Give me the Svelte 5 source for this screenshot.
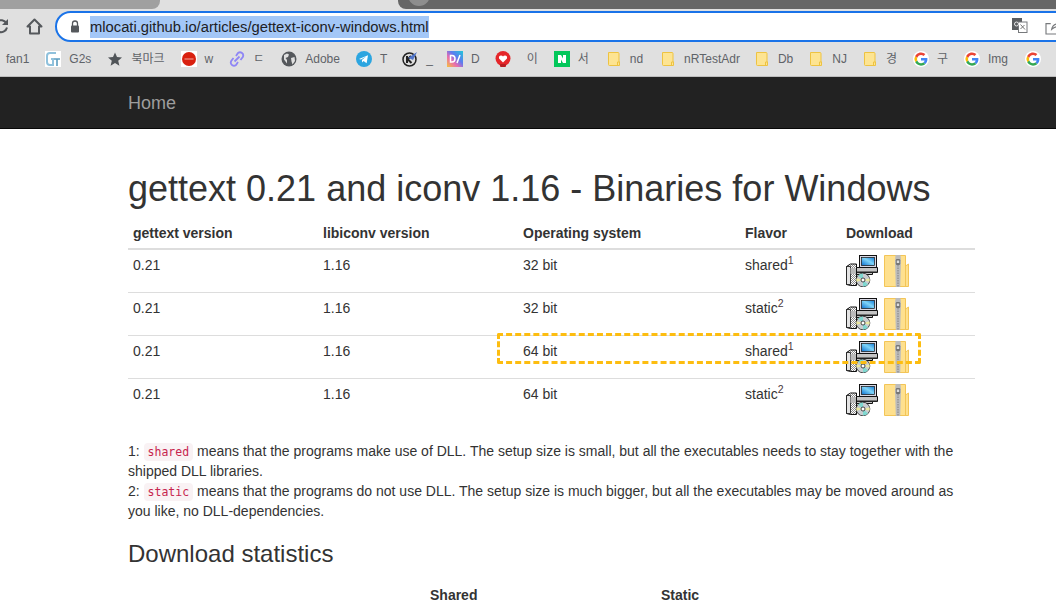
<script>
	// shift: extra room before the item, labelShift: extra room before its label
	const bookmarks = [
		{ icon: 'none', label: 'fan1' },
		{ icon: 'gts', label: 'G2s' },
		{ icon: 'star', label: '북마크' },
		{ icon: 'red', label: 'w' },
		{ icon: 'link', label: 'ㄷ' },
		{ icon: 'globe', label: 'Adobe', shift: 1 },
		{ icon: 'telegram', label: 'T' },
		{ icon: 'wp', label: '_', shift: -1 },
		{ icon: 'dev', label: 'D', shift: -2 },
		{ icon: 'heart', label: '이', shift: -1, labelShift: 8 },
		{ icon: 'naver', label: '서' },
		{ icon: 'file', label: 'nd', shift: 3 },
		{ icon: 'file', label: 'nRTestAdr', shift: 3 },
		{ icon: 'file', label: 'Db' },
		{ icon: 'file', label: 'NJ', shift: 1 },
		{ icon: 'file', label: '경', shift: 1 },
		{ icon: 'google', label: '구' },
		{ icon: 'google', label: 'Img' },
		{ icon: 'google', label: '', shift: 1 }
	];

	const rows = [
		{ os: '32 bit', flavor: 'shared', note: 1 },
		{ os: '32 bit', flavor: 'static', note: 2 },
		{ os: '64 bit', flavor: 'shared', note: 1 },
		{ os: '64 bit', flavor: 'static', note: 2 }
	];
</script>

{#snippet favicon(kind)}
	{#if kind === 'gts'}
		<svg viewBox="0 0 16 16" class="fav">
			<rect width="16" height="16" fill="#fff" />
			<path d="M11 2H5Q2 2 2 5v6q0 3 3 3h3V8H6" fill="none" stroke="#8fc1dc" stroke-width="2" />
			<path d="M9 8h6M12 8v7" stroke="#5c9dc0" stroke-width="1.6" />
		</svg>
	{:else if kind === 'star'}
		<svg viewBox="0 0 16 16" class="fav">
			<path d="M8 1.500l2 4.600 5 .4-3.800 3.300 1.200 4.900L8 12.100l-4.400 2.600 1.200-4.900L1 6.500l5-.4z" fill="#505458" />
		</svg>
	{:else if kind === 'red'}
		<svg viewBox="0 0 16 16" class="fav">
			<rect width="16" height="16" fill="#fff" />
			<circle cx="8" cy="8" r="7" fill="#d9200f" />
			<rect x="3.500" y="7.500" width="9" height="1" fill="#f2a79f" />
		</svg>
	{:else if kind === 'link'}
		<svg viewBox="0 0 16 16" class="fav">
			<path d="M7 5l2-3q2-1.500 4 0t.8 4l-2.300 3M9 11l-2 3q-2 1.500-4 0t-.8-4l2.300-3M5.500 10.500l5-5" fill="none" stroke="#8f86f5" stroke-width="1.800" />
		</svg>
	{:else if kind === 'globe'}
		<svg viewBox="0 0 16 16" class="fav">
			<circle cx="8" cy="8" r="7.500" fill="#55585c" />
			<path d="M3 4l3-1.500 2 1-1 2.500-2.500 1 1.500 2v3.500L3 8.500zM10 7l3.500-1 .5 4-2.500 3.500-1-3z" fill="#e0e0e0" />
		</svg>
	{:else if kind === 'telegram'}
		<svg viewBox="0 0 16 16" class="fav">
			<circle cx="8" cy="8" r="8" fill="#2ca5e0" />
			<path d="M3 8l9-3.700-1.400 7.900-3-2.200-1.400 1.400-.3-2.500 4.200-3.400-5.200 3.100z" fill="#fff" />
		</svg>
	{:else if kind === 'wp'}
		<svg viewBox="0 0 16 16" class="fav">
			<circle cx="7.500" cy="8.500" r="6.500" fill="#ddd" stroke="#222" stroke-width="1.500" />
			<path d="M5 5v7M5 9l4-4M6 8.500l3.500 3.500" fill="none" stroke="#222" stroke-width="2" />
			<path d="M6 7l9-6-4 8-2-1z" fill="#4f74c9" />
		</svg>
	{:else if kind === 'dev'}
		<svg viewBox="0 0 16 16" class="fav">
			<defs>
				<linearGradient id="devbg" x1="0" y1="1" x2="1" y2="0">
					<stop offset="0" stop-color="#f5c33b" />
					<stop offset="0.35" stop-color="#e96cb0" />
					<stop offset="0.6" stop-color="#5d7bf0" />
					<stop offset="1" stop-color="#20c8d8" />
				</linearGradient>
			</defs>
			<rect width="16" height="16" fill="url(#devbg)" />
			<path d="M3.500 4.500v6.500h1.500q3 0 3-3.250T5 4.500zM13 4l-3 8" fill="none" stroke="#fff" stroke-width="1.500" />
		</svg>
	{:else if kind === 'heart'}
		<svg viewBox="0 0 16 16" class="fav">
			<circle cx="8" cy="7.500" r="7.500" fill="#e5262a" />
			<path d="M8 11.500L4 7.500Q3.500 4.500 6 4.500q1.500 0 2 1 .5-1 2-1 2.500 0 2 3z" fill="#fff" />
			<rect x="5" y="13" width="6" height="3" rx="1" fill="#b81c20" />
		</svg>
	{:else if kind === 'naver'}
		<svg viewBox="0 0 16 16" class="fav">
			<rect width="16" height="16" fill="#03c75a" />
			<path d="M4 4h3l2 3.500V4h3v8H9L7 8.500V12H4z" fill="#fff" />
		</svg>
	{:else if kind === 'file'}
		<svg viewBox="0 0 12 14" class="file">
			<path d="M.5.500h9.500q1 0 1 1V10h.500v3.500H1.500q-1 0-1-1z" fill="#fde492" stroke="#eec341" />
			<path d="M9.500 13.500V10h2" fill="none" stroke="#eec341" />
		</svg>
	{:else if kind === 'google'}
		<svg viewBox="2 2 12 12" class="fav">
			<circle cx="8" cy="8" r="6" fill="#fff" />
			<path d="M12.800 8.200c0-.4 0-.7-.1-1H8v1.900h2.700a2.400 2.400 0 0 1-1 1.500l1.600 1.200c1-.9 1.500-2.100 1.500-3.600z" fill="#4285f4" />
			<path d="M8 13c1.300 0 2.400-.4 3.300-1.200L9.700 10.600c-.4.300-1 .5-1.700.5-1.300 0-2.400-.9-2.800-2L3.600 10.300C4.400 11.900 6.100 13 8 13z" fill="#34a853" />
			<path d="M5.200 9.100a3 3 0 0 1 0-2L3.600 5.800a5 5 0 0 0 0 4.500z" fill="#fbbc05" />
			<path d="M8 5c.7 0 1.400.3 1.900.7l1.400-1.400A5 5 0 0 0 3.600 5.800l1.600 1.300C5.600 5.900 6.700 5 8 5z" fill="#ea4335" />
		</svg>
	{/if}
{/snippet}

{#snippet installer()}
	<svg viewBox="0 0 32 32" class="dl">
		<defs>
			<linearGradient id="screen" x1="0" y1="1" x2="1" y2="0">
				<stop offset="0" stop-color="#0a6fd0" />
				<stop offset="0.55" stop-color="#7fd4f8" />
				<stop offset="1" stop-color="#0f7ad6" />
			</linearGradient>
			<pattern id="hatch" width="2" height="2" patternUnits="userSpaceOnUse">
				<rect width="2" height="2" fill="#fff" />
				<rect width="1" height="1" fill="#8a8a8a" />
				<rect x="1" y="1" width="1" height="1" fill="#8a8a8a" />
			</pattern>
		</defs>
		<path d="M.5 11.500l4-2.500h6v21.500h-6l-4-1z" fill="url(#hatch)" stroke="#111" />
		<path d="M.5 11.500h4v18h-4z" fill="#e4e4e4" stroke="#111" stroke-width="0.800" />
		<rect x="4.500" y="13" width="6" height="6" fill="#bbb" />
		<rect x="13.500" y="0.500" width="17" height="12" fill="#d8d8e4" stroke="#111" />
		<rect x="15.500" y="2.500" width="13" height="8" fill="url(#screen)" stroke="#111" stroke-width="0.700" />
		<path d="M10.500 12.500h21v5h-5v2h-16z" fill="#c4c4c4" stroke="#111" />
		<rect x="11" y="16.500" width="20" height="1.500" fill="#222" />
		<circle cx="17" cy="25" r="6.800" fill="#c8ccd0" stroke="#222" stroke-width="0.800" />
		<path d="M17 25l-5-4.500a6.800 6.800 0 0 1 5-2zM17 25l5 4.500a6.800 6.800 0 0 1-5 2z" fill="#7fd8d0" />
		<path d="M17 25l-6.500 1.800a6.800 6.800 0 0 1 0-3.600zM17 25l6.500-1.800a6.800 6.800 0 0 1 0 3.600z" fill="#ece9a0" />
		<circle cx="17" cy="25" r="2" fill="#fff" stroke="#222" stroke-width="0.800" />
	</svg>
{/snippet}

{#snippet zipfile()}
	<svg viewBox="0 0 25 32" class="zip">
		<path d="M.5.500h21v10.500l3-2v22.500H.5z" fill="#fee08e" stroke="#f3c557" />
		<path d="M21.500 31.500V11" fill="none" stroke="#f3c557" />
		<path d="M11.500 0h5l.5 6-.8 26h-4.400L11 6z" fill="#bcbcbc" />
		<path d="M14 10v22" stroke="#808080" stroke-dasharray="1.500 1" />
		<rect x="11.800" y="4" width="4.400" height="6" rx="1.200" fill="#767676" />
		<rect x="12.800" y="5.500" width="2.400" height="2.500" fill="#ddd" />
	</svg>
{/snippet}

<div class="page">
	<div class="tabs">
		<div class="tab-left"></div>
		<div class="tab-right"><span class="tab-dot"></span></div>
	</div>

	<div class="toolbar">
		<svg viewBox="0 0 16 16" class="reload">
			<path d="M13.500 5.500A6 6 0 1 0 14 9.500" fill="none" stroke="#55585c" stroke-width="2" />
			<path d="M15 1v6H9z" fill="#55585c" />
		</svg>
		<svg viewBox="0 0 17 17" class="home">
			<path d="M8.500 1.500L1.500 8.500h2.500v7h9v-7h2.500z" fill="none" stroke="#55585c" stroke-width="2" stroke-linejoin="round" />
		</svg>
		<div class="omnibox">
			<svg viewBox="0 0 10 13" class="lock">
				<path d="M2.500 6V3.500a2.500 2.500 0 0 1 5 0V6" fill="none" stroke="#55585c" stroke-width="1.300" />
				<rect x="1" y="5.500" width="8" height="7" rx="1" fill="#55585c" />
			</svg>
			<span class="url">mlocati.github.io/articles/gettext-iconv-windows.html</span>
			<svg viewBox="0 0 16 16" class="translate">
				<rect x="0" y="0" width="10" height="12" fill="#5a5d60" />
				<rect x="6.500" y="4" width="8.500" height="10.500" fill="#fff" stroke="#77797c" />
				<circle cx="4.500" cy="6" r="2" fill="none" stroke="#e8e8e8" />
				<path d="M8.500 6.500l4.500 5M8.500 11l4-4" stroke="#666" fill="none" stroke-width="0.900" />
			</svg>
			<svg viewBox="0 0 20 18" class="share">
				<path d="M6 6H1v11h14v-5" fill="none" stroke="#77797c" stroke-width="1.200" />
				<path d="M7 12q1-6 8-6V3l5 4.500-5 4.500V9q-5 0-8 3z" fill="none" stroke="#77797c" stroke-width="1.200" />
			</svg>
		</div>
	</div>

	<div class="bookmarks">
		{#each bookmarks as b}
			<div class="bookmark" style:margin-left="{b.shift ?? 0}px">
				{@render favicon(b.icon)}
				{#if b.label}<span style:margin-left="{b.labelShift ?? 0}px">{b.label}</span>{/if}
			</div>
		{/each}
	</div>

	<nav class="navbar"><a href="#home">Home</a></nav>

	<main class="container">
		<h1>gettext 0.21 and iconv 1.16 - Binaries for Windows</h1>

		<table class="downloads">
			<colgroup>
				<col class="c1" /><col class="c2" /><col class="c3" /><col class="c4" /><col class="c5" />
			</colgroup>
			<thead>
				<tr>
					<th>gettext version</th>
					<th>libiconv version</th>
					<th>Operating system</th>
					<th>Flavor</th>
					<th>Download</th>
				</tr>
			</thead>
			<tbody>
				{#each rows as r}
					<tr>
						<td>0.21</td>
						<td>1.16</td>
						<td>{r.os}</td>
						<td>{r.flavor}<sup>{r.note}</sup></td>
						<td class="icons">{@render installer()}{@render zipfile()}</td>
					</tr>
				{/each}
			</tbody>
		</table>

		<p class="notes">
			1: <code>shared</code> means that the programs make use of DLL. The setup size is small, but all the executables needs to stay together with the shipped DLL libraries.<br />
			2: <code>static</code> means that the programs do not use DLL. The setup size is much bigger, but all the executables may be moved around as you like, no DLL-dependencies.
		</p>

		<h2>Download statistics</h2>

		<table class="stats">
			<colgroup>
				<col class="s1" /><col class="s2" /><col />
			</colgroup>
			<thead>
				<tr><th></th><th>Shared</th><th>Static</th></tr>
			</thead>
		</table>
	</main>

	<div class="highlight"></div>
</div>

<style>
	:global(body) {
		margin: 0;
		background: #fff;
		overflow: hidden;
	}

	.page {
		position: relative;
		width: 1056px;
		height: 602px;
		overflow: hidden;
		font-family: 'Liberation Sans', Arial, sans-serif;
		font-size: 14px;
		line-height: 20px;
		color: #333;
	}

	.tabs {
		display: flex;
		justify-content: space-between;
		height: 9px;
		background: #e0e0e0;
	}

	.tab-left {
		width: 160px;
		background: #a0a0a0;
		border-bottom-right-radius: 8px;
	}

	.tab-right {
		width: 658px;
		background: #666;
		border-bottom-left-radius: 8px;
		padding-left: 10px;
		overflow: hidden;
		box-sizing: border-box;
	}

	.tab-dot {
		display: block;
		width: 22px;
		height: 22px;
		margin-top: -16px;
		border-radius: 50%;
		background: #8e8e8e;
	}

	.toolbar {
		display: flex;
		align-items: center;
		height: 33px;
		background: #e0e0e0;
	}

	.reload {
		width: 16px;
		height: 16px;
		margin-left: -7px;
		margin-top: 1px;
		flex: none;
	}

	.home {
		width: 17px;
		height: 17px;
		margin-left: 17px;
		margin-top: 1px;
		flex: none;
	}

	.omnibox {
		display: flex;
		align-items: center;
		flex: none;
		box-sizing: border-box;
		width: 1040px;
		height: 31px;
		margin-left: 12px;
		margin-top: 1px;
		padding-left: 13px;
		background: #fff;
		border: 2px solid #1a73e8;
		border-radius: 16px;
	}

	.lock {
		width: 10px;
		height: 13px;
		flex: none;
	}

	.url {
		margin-left: 10px;
		margin-top: 1px;
		font-size: 14.750px;
		line-height: 22px;
		color: #202124;
		background: #a3c7f7;
		white-space: nowrap;
	}

	.translate {
		width: 16px;
		height: 16px;
		margin-left: 583px;
		flex: none;
	}

	.share {
		width: 19px;
		height: 17px;
		margin-left: 17px;
		flex: none;
	}

	.bookmarks {
		display: flex;
		align-items: center;
		gap: 16px;
		height: 35px;
		padding-left: 6px;
		background: #e0e0e0;
		border-bottom: 1px solid #bdbdbd;
		box-sizing: border-box;
		font-family: 'Liberation Sans', 'Noto Sans CJK KR', sans-serif;
		font-size: 12px;
		color: #5f6368;
		white-space: nowrap;
	}

	.bookmark {
		display: flex;
		align-items: center;
		gap: 8px;
		flex: none;
	}

	.fav {
		width: 16px;
		height: 16px;
		flex: none;
	}

	.file {
		width: 12px;
		height: 14px;
		flex: none;
		margin-right: 2px;
	}

	.navbar {
		display: flex;
		align-items: center;
		height: 52px;
		padding-left: 128px;
		background: #222;
		border-bottom: 1px solid #080808;
		box-sizing: border-box;
	}

	.navbar a {
		font-size: 18px;
		color: #9d9d9d;
		text-decoration: none;
	}

	.container {
		width: 847px;
		margin-left: 128px;
	}

	h1 {
		margin: 40px 0 9px;
		font-size: 36px;
		line-height: 40px;
		font-weight: 500;
		color: #333;
	}

	table {
		width: 100%;
		border-collapse: separate;
		border-spacing: 0;
		table-layout: fixed;
	}

	.c1 {
		width: 190px;
	}

	.c2 {
		width: 200px;
	}

	.c3 {
		width: 222px;
	}

	.c4 {
		width: 101px;
	}

	.s1 {
		width: 297px;
	}

	.s2 {
		width: 231px;
	}

	th {
		padding: 5px;
		text-align: left;
		font-weight: 700;
		border-bottom: 2px solid #ddd;
	}

	td {
		padding: 5px;
		height: 32px;
		vertical-align: top;
		border-bottom: 1px solid #ddd;
		line-height: 20px;
	}

	tbody tr:last-child td {
		border-bottom: 0;
	}

	sup {
		font-size: 10.500px;
		line-height: 0;
		color: #4a3a3c;
	}

	.icons {
		display: flex;
		gap: 6px;
		height: 32px;
	}

	.dl {
		width: 32px;
		height: 32px;
		flex: none;
	}

	.zip {
		width: 25px;
		height: 32px;
		flex: none;
	}

	.notes {
		margin: 20px 0 0;
	}

	code {
		padding: 2px 4px;
		font-family: 'DejaVu Sans Mono', 'Liberation Mono', monospace;
		font-size: 11.500px;
		line-height: 1;
		color: #c7254e;
		background: #f9f2f4;
		border-radius: 4px;
	}

	h2 {
		margin: 20px 0 10px;
		font-size: 24px;
		line-height: 26px;
		font-weight: 500;
		color: #333;
	}

	.stats {
		margin-top: 13px;
	}

	.stats th {
		border: 0;
	}

	.highlight {
		position: absolute;
		left: 497px;
		top: 333px;
		width: 424px;
		height: 31px;
		box-sizing: border-box;
		border: 3px dashed #fdbd10;
		border-radius: 2px;
	}
</style>
